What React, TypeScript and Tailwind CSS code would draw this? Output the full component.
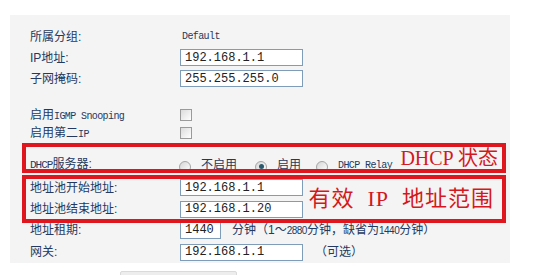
import React from 'react'

const cjk = { fontFamily: '"Liberation Sans", "Noto Sans CJK SC", sans-serif' }
const mono = { fontFamily: '"Liberation Mono", "Noto Sans CJK SC", monospace' }
const serif = { fontFamily: '"Liberation Serif", "Noto Sans CJK SC", serif' }

// Etiqueta de la columna izquierda
function Label({ children }: { children: React.ReactNode }) {
  return <div className="w-[150px] shrink-0 text-[12px] text-[#24395f] leading-none">{children}</div>
}

function Field({ value, w = 'w-[123px]' }: { value: string; w?: string }) {
  return (
    <div
      className={`${w} h-[17px] bg-white border border-[#7f9db9] pl-[4px] flex items-center text-[12px] text-[#222] leading-none`}
      style={mono}
    >
      {value}
    </div>
  )
}

function Check() {
  return <span className="block w-[12px] h-[12px] border border-[#9a9a9a] bg-gradient-to-br from-[#dcdcdc] to-white" />
}

function Radio({ on }: { on?: boolean }) {
  return (
    <span className="flex items-center justify-center w-[12px] h-[12px] rounded-full border border-[#a5a5a5] bg-gradient-to-br from-[#d6d6d6] to-white mt-[4px]">
      {on && <span className="block w-[5px] h-[5px] rounded-full bg-[#2a5a6e]" />}
    </span>
  )
}

export default function App() {
  return (
    <div className="w-[548px] h-[275px] bg-white overflow-hidden pt-[15px]" style={cjk}>
      {/* Panel principal */}
      <div className="relative ml-[10px] w-[500px] h-[248px] bg-[#f4f4f4] pl-[20px] pt-[11px]">
        <div className="flex items-center h-[21px]">
          <Label>所属分组:</Label>
          <span className="ml-[2px] text-[10px] tracking-[-0.6px] text-[#24395f]" style={mono}>Default</span>
        </div>
        <div className="flex items-center h-[21px]">
          <Label>IP地址:</Label>
          <Field value="192.168.1.1" />
        </div>
        <div className="flex items-center h-[21px]">
          <Label>子网掩码:</Label>
          <Field value="255.255.255.0" />
        </div>

        <div className="h-[17px]" />

        <div className="flex items-center h-[18px]">
          <Label>
            启用<span className="text-[10px] tracking-[-0.6px]" style={mono}>IGMP Snooping</span>
          </Label>
          <Check />
        </div>
        <div className="flex items-center h-[18px]">
          <Label>
            启用第二<span className="text-[10px] tracking-[-0.6px]" style={mono}>IP</span>
          </Label>
          <Check />
        </div>

        <div className="h-[10px]" />

        <div className="flex items-center h-[25px]">
          <Label>
            <span className="text-[11px] tracking-[-1px]" style={mono}>DHCP</span>服务器:
          </Label>
          <div className="flex items-center text-[12px] text-[#24395f] ml-[-1px]">
            <Radio />
            <span className="ml-[10px]">不启用</span>
            <span className="ml-[18px]"><Radio on /></span>
            <span className="ml-[10px]">启用</span>
            <span className="ml-[15px]"><Radio /></span>
            <span className="ml-[10px] mt-[1px] text-[10px] tracking-[-0.6px]" style={mono}>DHCP Relay</span>
          </div>
        </div>
        <div className="flex items-center h-[21px]">
          <Label>地址池开始地址:</Label>
          <Field value="192.168.1.1" />
        </div>
        <div className="flex items-center h-[22px]">
          <Label>地址池结束地址:</Label>
          <Field value="192.168.1.20" />
        </div>
        <div className="flex items-center h-[20px]">
          <Label>地址租期:</Label>
          <Field value="1440" w="w-[41px]" />
          <span className="ml-[11px] text-[12px] text-[#24395f]">
            分钟（1～<span className="text-[10px] tracking-[-0.5px]">2880</span>分钟，缺省为<span className="text-[10px] tracking-[-0.5px]">1440</span>分钟）
          </span>
        </div>
        <div className="flex items-center h-[24px]">
          <Label>网关:</Label>
          <Field value="192.168.1.1" />
          <span className="ml-[12px] text-[12px] text-[#24395f]">（可选）</span>
        </div>

        {/* Recuadros rojos de anotación */}
        <div className="absolute left-[12px] top-[128px] w-[484px] h-[30px] border-[4px] border-[#e0161f] flex items-center justify-end pr-[4px]">
          <span className="text-[20px] leading-none text-[#d41820]" style={serif}>
            DHCP 状态
          </span>
        </div>
        <div className="absolute left-[12px] top-[160px] w-[484px] h-[48px] border-[4px] border-[#e0161f] flex items-center justify-end pr-[8px]">
          <span className="text-[22px] leading-none text-[#d41820] tracking-[1px]" style={serif}>
            有效&nbsp;&nbsp;IP&nbsp;&nbsp;地址范围
          </span>
        </div>
      </div>

      {/* Botón parcialmente visible */}
      <div className="ml-[120px] mt-[8px] w-[117px] h-[12px] bg-[#ededed] border border-[#dadada] rounded-t-[2px]" />
    </div>
  )
}
